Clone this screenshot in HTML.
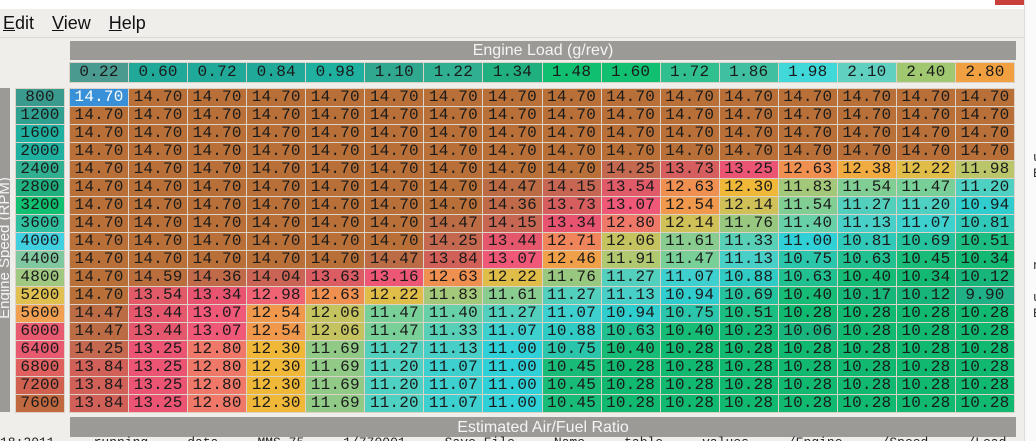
<!DOCTYPE html>
<html><head><meta charset="utf-8"><style>
html,body{margin:0;width:1036px;height:441px;overflow:hidden}
body{background:#f0eeeb;position:relative;font-family:"Liberation Sans",sans-serif}
.top{position:absolute;left:0;top:0;width:1024px;height:9px;background:#fff}
.close{position:absolute;left:995px;top:0;width:30px;height:5px;background:#c9403a}
.menu{position:absolute;left:3px;top:13px;font-size:18px;color:#111}
.menu span{margin-right:13px}
.sep{position:absolute;left:0;top:37px;width:1024px;height:1px;background:#dcd9d4}
.bar{position:absolute;background:#9c9a96;color:#f4f4f4;font-size:16px;text-align:center}
.right{position:absolute;left:1024px;top:0;width:12px;height:441px;background:#fafafa;border-left:1px solid #ddd;font-family:"Liberation Mono",monospace;font-size:13px;color:#333;overflow:hidden}
.right div{position:absolute;left:8px}
.grid{position:absolute;display:grid;font-family:"Liberation Mono",monospace;font-size:16px;letter-spacing:0.2px;color:#1a1a1a;background:#dcd2c8;gap:1px;padding:1px}
.grid div{text-align:center;line-height:17px;height:17px;overflow:hidden}
#hdr div{line-height:19px;height:19px}
.status{position:absolute;left:0;top:436px;height:5px;overflow:hidden;font-family:"Liberation Mono",monospace;font-size:13px;line-height:14px;color:#222;white-space:nowrap}
</style></head><body>
<div class="top"></div><div class="close"></div>
<div class="menu"><span><u>E</u>dit</span> <span><u>V</u>iew</span> <span><u>H</u>elp</span></div>
<div class="sep"></div>
<div class="bar" style="left:70px;top:41px;width:946px;height:19px;line-height:19px">Engine Load (g/rev)</div>
<div class="bar" style="left:0;top:88px;width:10px;height:324px;overflow:hidden"><div style="position:absolute;left:-3px;top:240px;transform:rotate(-90deg);transform-origin:0 0;white-space:nowrap;font-size:15px;line-height:15px;width:160px">Engine Speed (RPM)</div></div>
<div class="bar" style="left:70px;top:417px;width:946px;height:20px;line-height:21px">Estimated Air/Fuel Ratio</div>
<div class="grid" id="hdr" style="left:69px;top:62px;width:944px;grid-template-columns:repeat(16,1fr)">
<div style="background:#4a9a90">0.22</div><div style="background:#20a898">0.60</div><div style="background:#20a898">0.72</div><div style="background:#20a898">0.84</div><div style="background:#20b0a0">0.98</div><div style="background:#30a890">1.10</div><div style="background:#30b090">1.22</div><div style="background:#20b080">1.34</div><div style="background:#10c070">1.48</div><div style="background:#10c070">1.60</div><div style="background:#30c090">1.72</div><div style="background:#40c0a0">1.86</div><div style="background:#40d8d8">1.98</div><div style="background:#60d0c0">2.10</div><div style="background:#a0c870">2.40</div><div style="background:#f0a040">2.80</div>
</div>
<div class="grid" id="rpm" style="left:15px;top:88px;width:48px;grid-template-columns:1fr">
<div style="background:#3a9a8e">800</div><div style="background:#30a090">1200</div><div style="background:#20b0a0">1600</div><div style="background:#20b0a0">2000</div><div style="background:#30b090">2400</div><div style="background:#20b080">2800</div><div style="background:#10c070">3200</div><div style="background:#30c0a0">3600</div><div style="background:#40d0e0">4000</div><div style="background:#80c8a0">4400</div><div style="background:#a0c880">4800</div><div style="background:#e0c050">5200</div><div style="background:#f0a050">5600</div><div style="background:#e85a70">6000</div><div style="background:#e85a70">6400</div><div style="background:#e06060">6800</div><div style="background:#d06050">7200</div><div style="background:#c06840">7600</div>
</div>
<div class="grid" id="tbl" style="left:69px;top:88px;width:944px;grid-template-columns:repeat(16,1fr)">
<div style="background:#3890d8;color:#fff">14.70</div><div>14.70</div><div>14.70</div><div>14.70</div><div>14.70</div><div>14.70</div><div>14.70</div><div>14.70</div><div>14.70</div><div>14.70</div><div>14.70</div><div>14.70</div><div>14.70</div><div>14.70</div><div>14.70</div><div>14.70</div>
<div>14.70</div><div>14.70</div><div>14.70</div><div>14.70</div><div>14.70</div><div>14.70</div><div>14.70</div><div>14.70</div><div>14.70</div><div>14.70</div><div>14.70</div><div>14.70</div><div>14.70</div><div>14.70</div><div>14.70</div><div>14.70</div>
<div>14.70</div><div>14.70</div><div>14.70</div><div>14.70</div><div>14.70</div><div>14.70</div><div>14.70</div><div>14.70</div><div>14.70</div><div>14.70</div><div>14.70</div><div>14.70</div><div>14.70</div><div>14.70</div><div>14.70</div><div>14.70</div>
<div>14.70</div><div>14.70</div><div>14.70</div><div>14.70</div><div>14.70</div><div>14.70</div><div>14.70</div><div>14.70</div><div>14.70</div><div>14.70</div><div>14.70</div><div>14.70</div><div>14.70</div><div>14.70</div><div>14.70</div><div>14.70</div>
<div>14.70</div><div>14.70</div><div>14.70</div><div>14.70</div><div>14.70</div><div>14.70</div><div>14.70</div><div>14.70</div><div>14.70</div><div>14.25</div><div>13.73</div><div>13.25</div><div>12.63</div><div>12.38</div><div>12.22</div><div>11.98</div>
<div>14.70</div><div>14.70</div><div>14.70</div><div>14.70</div><div>14.70</div><div>14.70</div><div>14.70</div><div>14.47</div><div>14.15</div><div>13.54</div><div>12.63</div><div>12.30</div><div>11.83</div><div>11.54</div><div>11.47</div><div>11.20</div>
<div>14.70</div><div>14.70</div><div>14.70</div><div>14.70</div><div>14.70</div><div>14.70</div><div>14.70</div><div>14.36</div><div>13.73</div><div>13.07</div><div>12.54</div><div>12.14</div><div>11.54</div><div>11.27</div><div>11.20</div><div>10.94</div>
<div>14.70</div><div>14.70</div><div>14.70</div><div>14.70</div><div>14.70</div><div>14.70</div><div>14.47</div><div>14.15</div><div>13.34</div><div>12.80</div><div>12.14</div><div>11.76</div><div>11.40</div><div>11.13</div><div>11.07</div><div>10.81</div>
<div>14.70</div><div>14.70</div><div>14.70</div><div>14.70</div><div>14.70</div><div>14.70</div><div>14.25</div><div>13.44</div><div>12.71</div><div>12.06</div><div>11.61</div><div>11.33</div><div>11.00</div><div>10.81</div><div>10.69</div><div>10.51</div>
<div>14.70</div><div>14.70</div><div>14.70</div><div>14.70</div><div>14.70</div><div>14.47</div><div>13.84</div><div>13.07</div><div>12.46</div><div>11.91</div><div>11.47</div><div>11.13</div><div>10.75</div><div>10.63</div><div>10.45</div><div>10.34</div>
<div>14.70</div><div>14.59</div><div>14.36</div><div>14.04</div><div>13.63</div><div>13.16</div><div>12.63</div><div>12.22</div><div>11.76</div><div>11.27</div><div>11.07</div><div>10.88</div><div>10.63</div><div>10.40</div><div>10.34</div><div>10.12</div>
<div>14.70</div><div>13.54</div><div>13.34</div><div>12.98</div><div>12.63</div><div>12.22</div><div>11.83</div><div>11.61</div><div>11.27</div><div>11.13</div><div>10.94</div><div>10.69</div><div>10.40</div><div>10.17</div><div>10.12</div><div>9.90</div>
<div>14.47</div><div>13.44</div><div>13.07</div><div>12.54</div><div>12.06</div><div>11.47</div><div>11.40</div><div>11.27</div><div>11.07</div><div>10.94</div><div>10.75</div><div>10.51</div><div>10.28</div><div>10.28</div><div>10.28</div><div>10.28</div>
<div>14.47</div><div>13.44</div><div>13.07</div><div>12.54</div><div>12.06</div><div>11.47</div><div>11.33</div><div>11.07</div><div>10.88</div><div>10.63</div><div>10.40</div><div>10.23</div><div>10.06</div><div>10.28</div><div>10.28</div><div>10.28</div>
<div>14.25</div><div>13.25</div><div>12.80</div><div>12.30</div><div>11.69</div><div>11.27</div><div>11.13</div><div>11.00</div><div>10.75</div><div>10.40</div><div>10.28</div><div>10.28</div><div>10.28</div><div>10.28</div><div>10.28</div><div>10.28</div>
<div>13.84</div><div>13.25</div><div>12.80</div><div>12.30</div><div>11.69</div><div>11.20</div><div>11.07</div><div>11.00</div><div>10.45</div><div>10.28</div><div>10.28</div><div>10.28</div><div>10.28</div><div>10.28</div><div>10.28</div><div>10.28</div>
<div>13.84</div><div>13.25</div><div>12.80</div><div>12.30</div><div>11.69</div><div>11.20</div><div>11.07</div><div>11.00</div><div>10.45</div><div>10.28</div><div>10.28</div><div>10.28</div><div>10.28</div><div>10.28</div><div>10.28</div><div>10.28</div>
<div>13.84</div><div>13.25</div><div>12.80</div><div>12.30</div><div>11.69</div><div>11.20</div><div>11.07</div><div>11.00</div><div>10.45</div><div>10.28</div><div>10.28</div><div>10.28</div><div>10.28</div><div>10.28</div><div>10.28</div><div>10.28</div>
</div>
<div class="right"><div style="top:150px">ul</div><div style="top:166px">Ec</div><div style="top:258px">n</div><div style="top:290px">ul</div><div style="top:306px">Ec</div></div>
<div class="status">18:2011 ... running ... data ... MMS 75 ... 1/770001 ... Save File ... Name ... table ... values ... /Engine ... /Speed ... /Load ... /</div>
<script>
var S=[[9.90,[32,176,136]],[10.28,[16,184,112]],[10.45,[24,188,120]],[10.63,[32,192,144]],[10.81,[48,200,184]],[11.00,[48,208,216]],[11.13,[72,208,200]],[11.33,[88,208,184]],[11.47,[120,208,152]],[11.61,[136,204,144]],[11.76,[152,200,128]],[11.91,[176,200,112]],[12.14,[208,192,88]],[12.30,[240,184,56]],[12.46,[240,160,72]],[12.63,[240,144,80]],[12.80,[240,120,104]],[13.07,[240,88,120]],[13.34,[232,84,112]],[13.54,[224,90,104]],[13.84,[208,96,88]],[14.25,[196,104,80]],[14.47,[188,108,68]],[14.70,[184,112,56]]];
function col(v){if(v<=S[0][0])return S[0][1];for(var i=1;i<S.length;i++){if(v<=S[i][0]){var a=S[i-1],b=S[i],t=(v-a[0])/(b[0]-a[0]);return a[1].map(function(x,k){return Math.round(x+(b[1][k]-x)*t)})}}return S[S.length-1][1]}
document.querySelectorAll('#tbl div').forEach(function(d){if(d.style.background)return;var c=col(parseFloat(d.textContent));d.style.background='rgb('+c.join(',')+')'});
</script>
</body></html>
